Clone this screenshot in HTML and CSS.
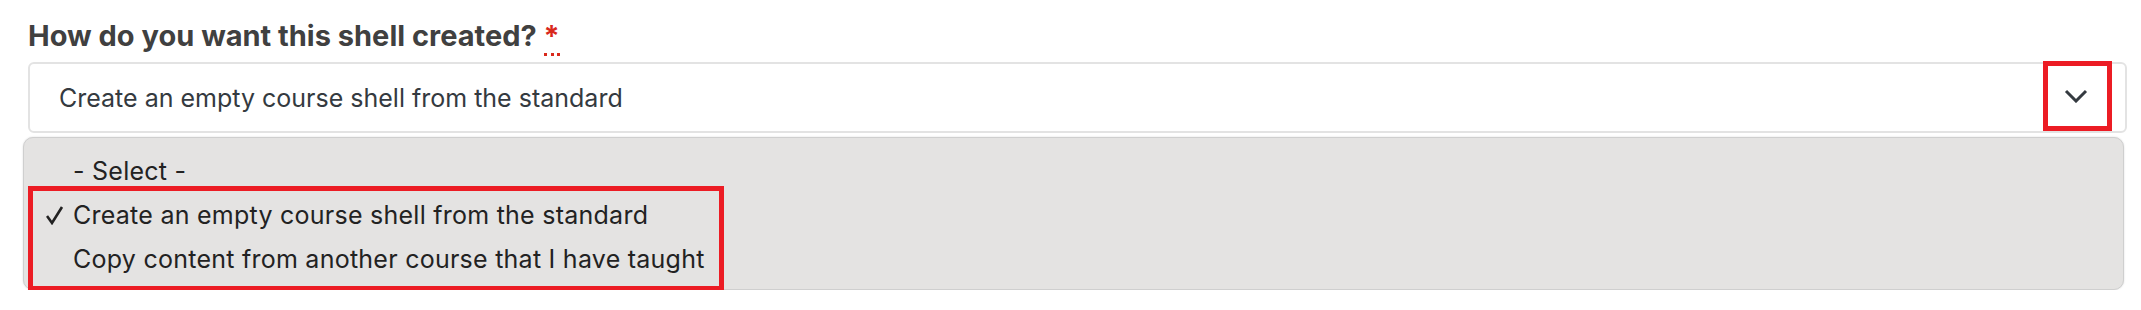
FILE: index.html
```html
<!DOCTYPE html>
<html lang="en">
<head>
    <meta charset="UTF-8">
    <meta name="viewport" content="width=device-width, initial-scale=1.0">
    <title>Course shell</title>
    <link rel="stylesheet" href="styles.css">
</head>
<body>
    <div class="form-group">
        <label class="field-label" for="shell-type">How do you want this shell created? <abbr class="required" title="required">*</abbr></label>
        <div class="select-box" id="shell-type">
            <span class="select-value">Create an empty course shell from the standard</span>
            <span class="select-arrow">
                <svg width="24" height="14" viewBox="0 0 24 14">
                    <polyline points="2,2 12,12 22,2" fill="none" stroke="#343a40" stroke-width="3"/>
                </svg>
            </span>
        </div>
        <div class="select-menu">
            <div class="option option-first"><span class="check"></span>- Select -</div>
            <div class="option-group">
                <div class="option">
                    <span class="check">
                        <svg width="18" height="20" viewBox="0 0 18 20">
                            <polyline points="1,11 6,18 16,2" fill="none" stroke="#222" stroke-width="2.6"/>
                        </svg>
                    </span>Create an empty course shell from the standard
                </div>
                <div class="option"><span class="check"></span>Copy content from another course that I have taught</div>
            </div>
        </div>
    </div>
</body>
</html>
```

FILE: styles.css
```css
body {
    margin: 0;
    padding: 18px 14px 0 28px;
    font-family: 'Inter', 'Noto Sans', sans-serif;
    background: #fff;
}

.field-label {
    display: block;
    font-size: 29px;
    font-weight: bold;
    color: #404040;
    margin-bottom: 9px;
}

.required {
    color: #d9291c;
    text-decoration: none;
    border-bottom: 3px dotted #d9291c;
}

.select-box {
    display: flex;
    align-items: center;
    height: 71px;
    box-sizing: border-box;
    border: 2px solid #e3e3e3;
    border-radius: 6px;
    padding-left: 29px;
}

.select-value {
    flex: 1;
    font-size: 25px;
    color: #343a40;
}

.select-arrow {
    width: 69px;
    height: 70px;
    box-sizing: border-box;
    border: 5px solid #ec1c24;
    margin-right: 13px;
    margin-top: -4px;
    display: flex;
    justify-content: center;
    align-items: center;
    padding-right: 4px;
}

.select-arrow svg {
    display: block;
}

.select-menu {
    margin: 4px 3px 0 -5px;
    background: #e4e3e2;
    border: 1px solid #cfcfcf;
    border-radius: 10px;
    box-shadow: 0 0 2px rgba(0, 0, 0, 0.15);
    padding-top: 11px;
    height: 153px;
    box-sizing: border-box;
}

.option {
    display: flex;
    align-items: center;
    height: 44px;
    font-size: 25px;
    letter-spacing: 0.25px;
    color: #222;
}

.option-first {
    padding-left: 9px;
}

.check {
    width: 40px;
    flex-shrink: 0;
}

.check svg {
    display: block;
    margin-left: 13px;
}

.option-group {
    width: 696px;
    box-sizing: border-box;
    border: 5px solid #ec1c24;
    margin: -7px 0 0 4px;
    padding: 2px 0 5px;
}
```
